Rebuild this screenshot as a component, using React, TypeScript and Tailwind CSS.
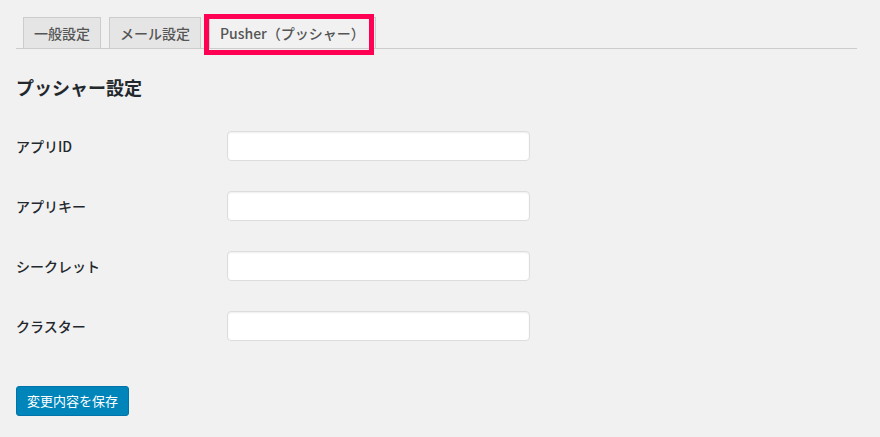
import React from 'react';

const font = { fontFamily: '"Noto Sans CJK JP", "Noto Sans", sans-serif' };

const tabs = [
  { id: 'general', label: '一般設定' },
  { id: 'mail', label: 'メール設定' },
  { id: 'pusher', label: 'Pusher（プッシャー）' },
];

const fields = ['アプリID', 'アプリキー', 'シークレット', 'クラスター'];

const App = () => {
  const active = 'pusher';

  return (
    <div
      className="min-h-[437px] w-[880px] bg-[#f1f1f1] pl-4 pr-[23px] pt-[17px] text-[#23282d]"
      style={font}
    >
      {/* tabs */}
      <div className="flex items-end border-b border-[#ccc] pl-[7px]">
        {tabs.map((tab) => (
          <div key={tab.id} className="relative mr-2">
            <div
              className={
                tab.id === active
                  ? 'flex h-[31px] items-center border-x border-t border-[#ccc] bg-[#f1f1f1] px-[10px] text-[14px] font-medium text-[#555]'
                  : 'flex h-[31px] items-center border-x border-t border-[#ccc] bg-[#e5e5e5] px-[10px] text-[14px] font-medium text-[#555]'
              }
            >
              {tab.label}
            </div>
            {tab.id === active && (
              <div className="pointer-events-none absolute -left-[5px] -top-[3px] h-[41px] w-[170px] border-[5px] border-[#ff0055]" />
            )}
          </div>
        ))}
      </div>

      <h2 className="mt-[26px] text-[18px] font-bold leading-[24px]">プッシャー設定</h2>

      {/* fields */}
      <div className="mt-[17px]">
        {fields.map((label) => (
          <div key={label} className="flex h-[60px] items-center">
            <div className="w-[211px] text-[14px] font-medium">{label}</div>
            <input
              type="text"
              className="h-[30px] w-[303px] rounded-[4px] border border-[#ddd] bg-white px-2 text-[14px] shadow-[inset_0_1px_2px_rgba(0,0,0,0.07)] outline-none"
            />
          </div>
        ))}
      </div>

      <button className="mt-[30px] flex h-[30px] w-[113px] items-center justify-center rounded-[3px] border border-[#0073aa] bg-[#0085ba] text-[13px] text-white">
        変更内容を保存
      </button>
    </div>
  );
};

export default App;
